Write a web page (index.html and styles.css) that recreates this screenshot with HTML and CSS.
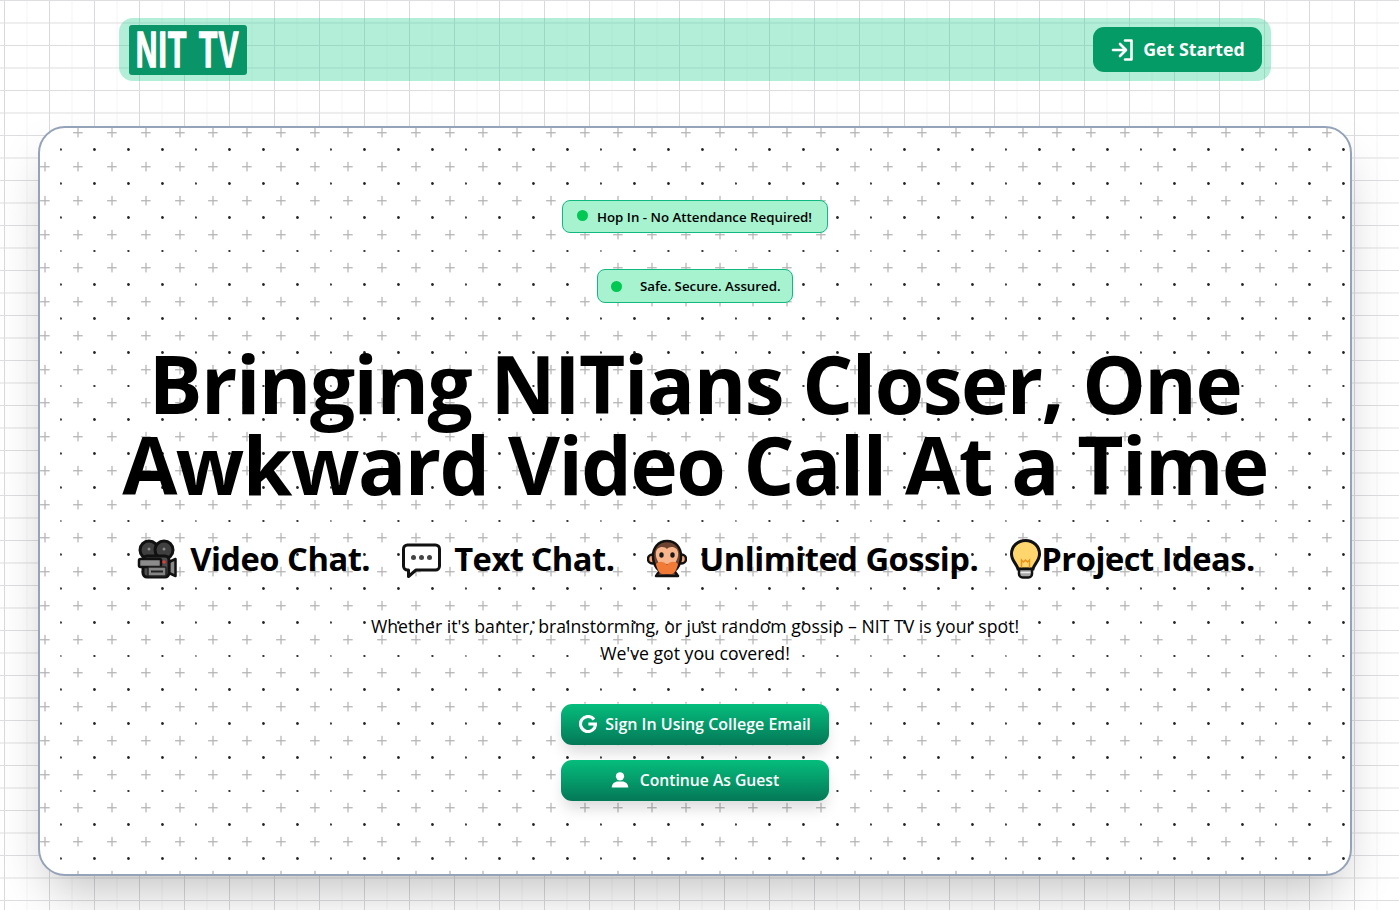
FILE: index.html
```html
<!DOCTYPE html>
<html>
<head>
    <meta charset="utf-8">
    <title>NIT TV</title>
    <link rel="stylesheet" href="styles.css">
</head>
<body>
    <!-- Top bar -->
    <header class="topbar">
        <div class="logo"><span class="logo-text">NIT TV</span></div>
        <button class="start-btn">
            <svg class="start-icon" viewBox="0 0 24 24" fill="none" stroke="#fff" stroke-width="2.600" stroke-linecap="round" stroke-linejoin="round">
                <path d="M3 12h12M10 6l6 6-6 6M15 2.500h6.500v19H15"/>
            </svg>
            <span class="start-label">Get Started</span>
        </button>
    </header>

    <!-- Main card -->
    <main class="card">
        <div class="pill pill-first"><span class="pill-dot"></span>Hop In - No Attendance Required!</div>
        <div class="pill pill-second"><span class="pill-dot"></span>Safe. Secure. Assured.</div>

        <h1 class="headline">Bringing NITians Closer, One<br>Awkward Video Call At a Time</h1>

        <div class="features">
            <span class="feature">
                <svg class="emoji" viewBox="0 0 40 40">
                    <circle cx="12" cy="11" r="9" fill="#3f3f3f" stroke="#111" stroke-width="3"/>
                    <circle cx="27" cy="11" r="9" fill="#3f3f3f" stroke="#111" stroke-width="3"/>
                    <circle cx="12" cy="10" r="1.500" fill="#8a8a8a"/>
                    <circle cx="27" cy="10" r="1.500" fill="#8a8a8a"/>
                    <path d="M32 23l6.500-3v17l-6.500-3z" fill="#8a8a8a" stroke="#111" stroke-width="2.500" stroke-linejoin="round"/>
                    <rect x="6" y="17" width="26" height="21" rx="4" fill="#4d4d4d" stroke="#111" stroke-width="3"/>
                    <rect x="2" y="20" width="22" height="8" rx="1.500" fill="#8c8c8c" stroke="#111" stroke-width="2.500"/>
                    <rect x="11" y="28" width="18" height="9" rx="1" fill="#858585" stroke="#222" stroke-width="1.500"/>
                    <path d="M14 32.500h12" stroke="#222" stroke-width="2"/>
                    <circle cx="27" cy="23" r="1.700" fill="#e53935"/>
                </svg>
                Video Chat.
            </span>
            <span class="feature">
                <svg class="emoji emoji-bubble" viewBox="0.5 0 39 40">
                    <path d="M6 6h28a4 4 0 0 1 4 4v17a4 4 0 0 1-4 4H14.500L7 37.500V31H6a4 4 0 0 1-4-4V10a4 4 0 0 1 4-4z" fill="#fff" stroke="#111" stroke-width="3" stroke-linejoin="round"/>
                    <circle cx="12" cy="18.500" r="2.500" fill="#444"/>
                    <circle cx="20" cy="18.500" r="2.500" fill="#444"/>
                    <circle cx="28" cy="18.500" r="2.500" fill="#444"/>
                </svg>
                Text Chat.
            </span>
            <span class="feature">
                <svg class="emoji" viewBox="0 0 40 40">
                    <circle cx="5.500" cy="20" r="4.500" fill="#f4a67a" stroke="#111" stroke-width="2.500"/>
                    <circle cx="34.500" cy="20" r="4.500" fill="#f4a67a" stroke="#111" stroke-width="2.500"/>
                    <path d="M14 30l-5 7h22l-5-7z" fill="#6d4230" stroke="#111" stroke-width="2.500" stroke-linejoin="round"/>
                    <path d="M20 2c9 0 14 7 14 15 0 9-5 17-14 17S6 26 6 17C6 9 11 2 20 2z" fill="#6d4230" stroke="#111" stroke-width="2.500"/>
                    <path d="M20 10c2-3 10-3 11 3 1 5-2 9-3 12H12c-1-3-4-7-3-12 1-6 9-6 11-3z" fill="#f8b48a"/>
                    <ellipse cx="14.500" cy="16" rx="2.200" ry="2.800" fill="#1a1a1a"/>
                    <ellipse cx="25.500" cy="16" rx="2.200" ry="2.800" fill="#1a1a1a"/>
                    <path d="M9 25c3-3 8-3 11 1 3-4 8-4 11-1-1 6-4 10-6 10H15c-2 0-5-4-6-10z" fill="#f07a36"/>
                </svg>
                Unlimited Gossip.
            </span>
            <span class="feature feature-tight">
                <svg class="emoji emoji-bulb" viewBox="0.5 0 31 40">
                    <path d="M16 1.500C8 1.500 2 7.500 2 15c0 7 5.500 10 6.500 15h15c1-5 6.500-8 6.500-15 0-7.500-6-13.500-14-13.500z" fill="#ffd66e" stroke="#111" stroke-width="3"/>
                    <path d="M12 29v-8l2 2 2-2 2 2 2-2v8" fill="none" stroke="#e8931a" stroke-width="1.500"/>
                    <path d="M9.500 30h13v5a3.500 3.500 0 0 1-3.500 3.500h-6A3.500 3.500 0 0 1 9.500 35z" fill="#a8a8a8" stroke="#111" stroke-width="2.500"/>
                    <path d="M11 33.500h10" stroke="#eee" stroke-width="1.500"/>
                </svg>
                Project Ideas.
            </span>
        </div>

        <p class="blurb">Whether it's banter, brainstorming, or just random gossip – NIT TV is your spot!<br>We've got you covered!</p>

        <div class="actions">
            <button class="action-btn">
                <svg class="action-icon" viewBox="0 0 24 24" fill="none" stroke="#fff" stroke-width="4.200">
                    <path d="M20 6A10 10 0 1 0 22 12H12.500"/>
                </svg>
                Sign In Using College Email
            </button>
            <button class="action-btn action-btn-guest">
                <svg class="action-icon" viewBox="0 0 24 24" fill="#fff">
                    <circle cx="12" cy="7" r="5.500"/>
                    <path d="M1 22c0-5 4-8 8-8h6c4 0 8 3 8 8z"/>
                </svg>
                Continue As Guest
            </button>
        </div>
    </main>
</body>
</html>
```

FILE: styles.css
```css
* {
    box-sizing: border-box;
}

html, body {
    margin: 0;
    height: 910px;
    overflow: hidden;
}

body {
    padding-top: 18px;
    font-family: "Open Sans", "Noto Sans", sans-serif;
    color: #000;
    background-color: #fff;
    background-image:
        linear-gradient(#dedee0 1.4px, transparent 1.4px),
        linear-gradient(90deg, #dadadc 1.4px, transparent 1.4px),
        linear-gradient(90deg, #f5f5f5 1px, transparent 1px);
    background-size: 22.5px 22.5px, 45px 45px, 45px 45px;
    background-position: 0 0, 4px 0, 26.500px 0;
}

.topbar {
    width: 1152px;
    height: 63px;
    margin-left: 119px;
    padding: 5px 9px 5px 10px;
    display: flex;
    align-items: center;
    justify-content: space-between;
    background: rgba(52, 211, 153, 0.38);
    border-radius: 14px;
}

.logo {
    width: 118px;
    height: 50px;
    display: flex;
    align-items: center;
    justify-content: center;
    background: #0a9569;
    border-radius: 3px;
}

.logo-text {
    display: block;
    flex: none;
    font-family: "Liberation Sans", sans-serif;
    font-weight: 700;
    font-size: 50px;
    line-height: 1;
    letter-spacing: 2px;
    word-spacing: 3px;
    color: #fff;
    white-space: nowrap;
    -webkit-text-stroke: 1.500px #fff;
    transform: scaleX(0.6);
}

.start-btn {
    height: 45px;
    width: 169px;
    display: flex;
    align-items: center;
    justify-content: center;
    gap: 9px;
    border: 0;
    border-radius: 11px;
    background: #059b66;
    color: #fff;
    font-family: inherit;
    font-weight: 700;
    font-size: 17.800px;
}

.start-label {
    padding-bottom: 2px;
}

.start-icon {
    width: 24px;
    height: 24px;
}

.card {
    width: 1314px;
    height: 750px;
    margin: 45px 0 0 38px;
    padding-top: 72px;
    display: flex;
    flex-direction: column;
    align-items: center;
    border: 2px solid #94a3b8;
    border-radius: 27px;
    box-shadow: 0 25px 50px -12px rgba(0, 0, 0, 0.25);
    background-color: #fff;
    background-image: url("data:image/svg+xml,%3Csvg xmlns='http://www.w3.org/2000/svg' width='135' height='135' viewBox='0 0 135 135'%3E%3Cg fill='%23b4b4b4'%3E%3Crect x='48' y='64' width='38' height='5'/%3E%3Crect x='65' y='47' width='5' height='38'/%3E%3C/g%3E%3Ccircle cx='133' cy='133' r='5.500' fill='%23222'/%3E%3Ccircle cx='-2' cy='133' r='5.500' fill='%23222'/%3E%3Ccircle cx='133' cy='-2' r='5.500' fill='%23222'/%3E%3Ccircle cx='-2' cy='-2' r='5.500' fill='%23222'/%3E%3C/svg%3E");
    background-size: 33.75px 33.75px;
    background-position: 21.500px -11.500px;
}

.pill {
    display: flex;
    align-items: center;
    background: #a7f3d0;
    border: 1px solid #10b981;
    border-radius: 8px;
    font-size: 13.300px;
    font-weight: 600;
    white-space: nowrap;
}

.pill-dot {
    flex: none;
    width: 11px;
    height: 11px;
    border-radius: 50%;
    background: #00c853;
}

.pill-first {
    width: 266px;
    height: 33px;
    padding: 1px 13px 0 14px;
    margin-bottom: 36px;
}

.pill-first .pill-dot {
    margin-right: 9px;
    margin-top: -3px;
}

.pill-second {
    width: 196px;
    height: 34px;
    padding: 0 13px;
}

.pill-second .pill-dot {
    margin-right: 18px;
}

.headline {
    margin: 39px 0 0;
    text-align: center;
    font-size: 80px;
    font-weight: 700;
    line-height: 81px;
    letter-spacing: -1.500px;
    white-space: nowrap;
}

.features {
    display: flex;
    align-items: center;
    margin: 32px 0 0 2px;
    gap: 32px;
}

.feature {
    display: flex;
    align-items: center;
    gap: 13px;
    font-size: 32.700px;
    font-weight: 700;
    line-height: 45px;
    letter-spacing: -0.500px;
    white-space: nowrap;
}

.feature-tight {
    gap: 0;
}

.emoji {
    width: 40px;
    height: 40px;
    flex: none;
}

.emoji-bubble {
    width: 39px;
}

.emoji-bulb {
    width: 31px;
}

.blurb {
    margin: 32px 0 0;
    text-align: center;
    font-size: 17.650px;
    font-weight: 500;
    line-height: 27px;
}

.actions {
    margin-top: 37px;
    display: flex;
    flex-direction: column;
    gap: 15px;
}

.action-btn {
    width: 268px;
    height: 41px;
    padding-bottom: 2px;
    display: flex;
    align-items: center;
    justify-content: center;
    gap: 8px;
    border: 0;
    border-radius: 11px;
    background: linear-gradient(#05bd7c, #047857);
    color: #fff;
    font-family: inherit;
    font-size: 16px;
    font-weight: 600;
    box-shadow: 0 10px 15px -3px rgba(0, 0, 0, 0.15), 0 0 0 1px rgba(255, 255, 255, 0.3);
}

.action-icon {
    width: 18px;
    height: 18px;
}

.action-btn-guest {
    gap: 11px;
    font-size: 15.700px;
}
```
